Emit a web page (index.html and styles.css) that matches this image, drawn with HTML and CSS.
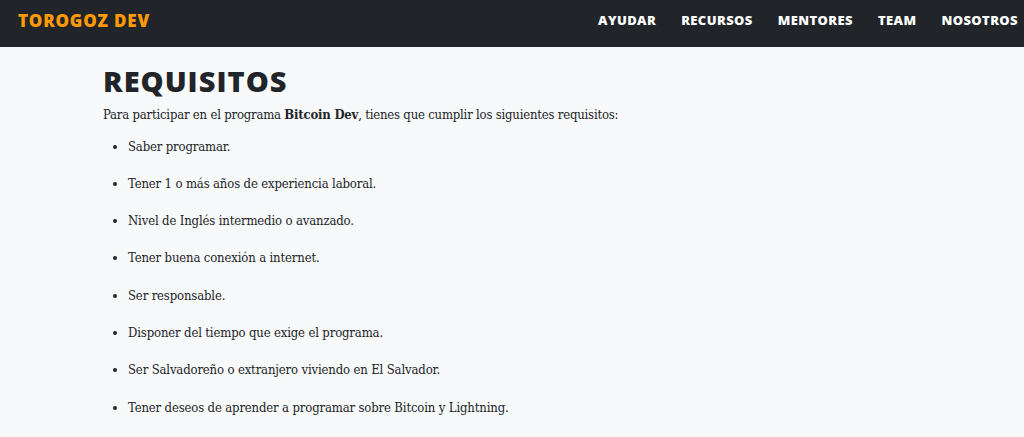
FILE: index.html
```html
<!DOCTYPE html>
<html lang="es">
<head>
<meta charset="utf-8">
<title>Requisitos - Torogoz Dev</title>
<link rel="stylesheet" href="styles.css">
</head>
<body>
<header class="navbar">
  <a class="brand" href="#">TOROGOZ DEV</a>
  <nav class="nav">
    <a href="#">AYUDAR</a>
    <a href="#">RECURSOS</a>
    <a href="#">MENTORES</a>
    <a href="#">TEAM</a>
    <a href="#">NOSOTROS</a>
  </nav>
</header>
<main class="content">
  <h1 class="title">REQUISITOS</h1>
  <p class="intro">Para participar en el programa <strong>Bitcoin Dev</strong>, tienes que cumplir los siguientes requisitos:</p>
  <ul class="reqs">
    <li>Saber programar.</li>
    <li>Tener 1 o más años de experiencia laboral.</li>
    <li>Nivel de Inglés intermedio o avanzado.</li>
    <li>Tener buena conexión a internet.</li>
    <li>Ser responsable.</li>
    <li>Disponer del tiempo que exige el programa.</li>
    <li>Ser Salvadoreño o extranjero viviendo en El Salvador.</li>
    <li>Tener deseos de aprender a programar sobre Bitcoin y Lightning.</li>
  </ul>
</main>
</body>
</html>
```
FILE: styles.css
```css
html, body {
  margin: 0;
  padding: 0;
}
body {
  background: #f8f9fa;
  color: #212529;
  font-family: "DejaVu Serif", serif;
  font-stretch: condensed;
}
.navbar {
  height: 47px;
  background: #212529;
  display: flex;
  align-items: center;
  justify-content: space-between;
  padding: 0 6px 0 18px;
  box-sizing: border-box;
}
.brand {
  color: #fd9a06;
  font-family: "Open Sans", "DejaVu Sans", sans-serif;
  font-stretch: normal;
  font-weight: 800;
  font-size: 17px;
  letter-spacing: 0.8px;
  text-decoration: none;
  margin-top: -6px;
}
.nav {
  display: flex;
  gap: 25px;
  margin-top: -7px;
}
.nav a {
  color: #ffffff;
  font-family: "Open Sans", "DejaVu Sans", sans-serif;
  font-stretch: normal;
  font-weight: 800;
  font-size: 13px;
  letter-spacing: 0.4px;
  text-decoration: none;
}
.content {
  padding: 16px 0 0 103px;
}
.title {
  font-family: "Open Sans", "DejaVu Sans", sans-serif;
  font-stretch: normal;
  font-weight: 800;
  font-size: 29px;
  letter-spacing: 1px;
  margin: 0;
  line-height: 36px;
}
.intro {
  font-size: 13px;
  letter-spacing: -0.2px;
  margin: 5px 0 0;
  line-height: 22px;
}
.reqs {
  margin: 9.5px 0 0;
  padding-left: 25px;
  font-size: 13px;
  letter-spacing: -0.15px;
}
.reqs li {
  line-height: 22px;
  margin-bottom: 15.3px;
}
```
